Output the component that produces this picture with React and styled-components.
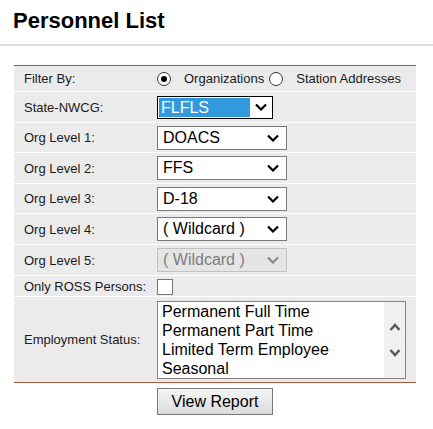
import React from 'react'
import styled, { createGlobalStyle } from 'styled-components'

const GlobalStyle = createGlobalStyle`
  body {
    margin: 0;
    background: #fff;
    font-family: "Liberation Sans", Arial, sans-serif;
    color: #000;
  }
`

const Title = styled.h1`
  margin: 0;
  padding: 8px 0 0 13px;
  font-size: 22px;
  line-height: 25px;
  font-weight: bold;
`

const Rule = styled.div`
  height: 2px;
  margin-top: 11px;
  background: #dcdcdc;
`

const Form = styled.div`
  margin: 19px 0 0 14px;
  width: 402px;
  display: grid;
  grid-template-columns: 143px 1fr;
  row-gap: 1px;
  background: #fff;
  border-top: 1px solid #a8573a;
  border-bottom: 1px solid #a8573a;
`

const Label = styled.div`
  height: ${p => p.h}px;
  display: flex;
  align-items: center;
  padding-left: 10px;
  background: #ebebeb;
  font-size: 13px;
  color: #1a1a1a;
  white-space: nowrap;
`

const Cell = styled.div`
  height: ${p => p.h}px;
  display: flex;
  align-items: center;
  background: #ebebeb;
  font-size: 13px;
  color: #1a1a1a;
`

const Radio = styled.span`
  width: 12px;
  height: 12px;
  margin: 0 13px 0 ${p => p.first ? 0 : 5}px;
  border: 1px solid #333;
  border-radius: 50%;
  background: #fff;
  display: flex;
  align-items: center;
  justify-content: center;
  &::after {
    content: "";
    width: 6px;
    height: 6px;
    border-radius: 50%;
    background: ${p => p.checked ? '#000' : 'transparent'};
  }
`

const SelectBox = styled.div`
  box-sizing: border-box;
  width: ${p => p.w}px;
  height: ${p => p.focused ? 23 : 24}px;
  display: flex;
  align-items: center;
  justify-content: space-between;
  padding: ${p => p.focused ? '0 5px 0 1px' : '0 7px 0 5px'};
  border: 1px solid ${p => p.focused ? '#000' : p.disabled ? '#c2c2c2' : '#7a7a7a'};
  background: ${p => p.disabled ? '#e5e5e5' : '#fff'};
  color: ${p => p.disabled ? '#7d7d7d' : '#000'};
  font-size: 16px;
  svg {
    stroke: ${p => p.disabled ? '#8a8a8a' : '#000'};
  }
`

const Highlight = styled.span`
  width: 91px;
  height: 19px;
  line-height: 19px;
  padding-left: 2px;
  box-sizing: border-box;
  background: #3399dd;
  color: #fff;
`

const Check = styled.span`
  box-sizing: border-box;
  width: 16px;
  height: 16px;
  border: 1px solid #767676;
  background: #fff;
  margin-top: 1px;
`

const ListBox = styled.div`
  box-sizing: border-box;
  width: 249px;
  height: 78px;
  display: flex;
  border: 1px solid #828282;
  background: #fff;
`

const Options = styled.div`
  flex: 1;
  padding-left: 4px;
  font-size: 16px;
  line-height: 19px;
  color: #000;
  overflow: hidden;
`

const ScrollTrack = styled.div`
  width: 21px;
  display: flex;
  flex-direction: column;
  align-items: center;
  justify-content: center;
  gap: 16px;
  background: #f0f0f0;
  padding-top: 1px;
`

const Actions = styled.div`
  width: 402px;
  margin: 5px 0 0 14px;
  display: flex;
  justify-content: center;
`

const Button = styled.button`
  width: 116px;
  height: 27px;
  border: 1px solid #7a7a7a;
  border-radius: 0;
  background: linear-gradient(#f5f5f5, #dcdcdc);
  font-family: "Liberation Sans", Arial, sans-serif;
  font-size: 16px;
  color: #000;
  padding: 0;
`

const Chevron = ({ color }) => (
  <svg width="12" height="8" viewBox="0 0 12 8" fill="none" stroke={color} strokeWidth="2.2">
    <path d="M1 1.5 L6 6.5 L11 1.5" />
  </svg>
)

const ScrollArrow = ({ up }) => (
  <svg width="12" height="10" viewBox="0 0 12 10" fill="none" stroke="#5c5c5c" strokeWidth="2.6">
    <path d={up ? 'M1.5 8 L6 3 L10.5 8' : 'M1.5 2 L6 7 L10.5 2'} />
  </svg>
)

const orgLevels = [
  { label: 'Org Level 1:', value: 'DOACS', h: 29 },
  { label: 'Org Level 2:', value: 'FFS', h: 30 },
  { label: 'Org Level 3:', value: 'D-18', h: 29 },
  { label: 'Org Level 4:', value: '( Wildcard )', h: 30 },
  { label: 'Org Level 5:', value: '( Wildcard )', h: 30, disabled: true },
]

const statuses = [
  'Permanent Full Time',
  'Permanent Part Time',
  'Limited Term Employee',
  'Seasonal',
]

export default function App() {
  return (
    <>
      <GlobalStyle />
      <Title>Personnel List</Title>
      <Rule />
      <Form>
        <Label h={25}>Filter By:</Label>
        <Cell h={25}>
          <Radio first checked />
          Organizations
          <Radio />
          Station Addresses
        </Cell>

        <Label h={30}>State-NWCG:</Label>
        <Cell h={30}>
          <SelectBox w={116} focused>
            <Highlight>FLFLS</Highlight>
            <Chevron />
          </SelectBox>
        </Cell>

        {orgLevels.map(o => (
          <React.Fragment key={o.label}>
            <Label h={o.h}>{o.label}</Label>
            <Cell h={o.h}>
              <SelectBox w={130} disabled={o.disabled}>
                {o.value}
                <Chevron />
              </SelectBox>
            </Cell>
          </React.Fragment>
        ))}

        <Label h={20}>Only ROSS Persons:</Label>
        <Cell h={20}>
          <Check />
        </Cell>

        <Label h={85}>Employment Status:</Label>
        <Cell h={85}>
          <ListBox>
            <Options>
              {statuses.map(s => <div key={s}>{s}</div>)}
            </Options>
            <ScrollTrack>
              <ScrollArrow up />
              <ScrollArrow />
            </ScrollTrack>
          </ListBox>
        </Cell>
      </Form>
      <Actions>
        <Button>View Report</Button>
      </Actions>
    </>
  )
}
